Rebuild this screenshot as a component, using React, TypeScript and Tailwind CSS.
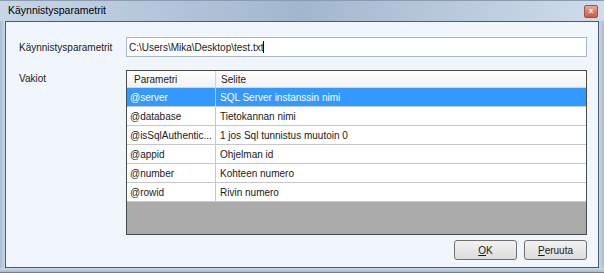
const rows = [
  { param: "@server", desc: "SQL Server instanssin nimi", selected: true },
  { param: "@database", desc: "Tietokannan nimi" },
  { param: "@isSqlAuthentic...", desc: "1 jos Sql tunnistus muutoin 0" },
  { param: "@appid", desc: "Ohjelman id" },
  { param: "@number", desc: "Kohteen numero" },
  { param: "@rowid", desc: "Rivin numero" },
];

export default function App() {
  return (
    <div
      className="w-[604px] h-[273px] flex flex-col bg-[#b4c7da] text-[10px] text-[#1a1a1a]"
      style={{ fontFamily: '"Liberation Sans", Arial, sans-serif' }}
    >
      {/* title bar */}
      <div className="h-[21px] flex items-center justify-between pl-[8px] pr-[6px] bg-gradient-to-r from-[#c6d6e7] via-[#a3b7cc] to-[#cfdcea] border-t border-[#8a9cb0]">
        <span className="text-[10.5px] text-black">Käynnistysparametrit</span>
        <div className="w-[14px] h-[13px] rounded-[2px] border border-[#9a5448] bg-gradient-to-b from-[#e8a696] to-[#c85a46] flex items-center justify-center text-white text-[8px] font-bold leading-none">
          x
        </div>
      </div>

      <div className="flex flex-1 min-h-0">
        <div className="w-[5px] bg-gradient-to-r from-[#a9bccf] to-[#cad8e6]" />
        {/* client */}
        <div className="flex-1 border border-[#4d5c6c] bg-[#f0f6fc] pl-[13px] pr-[11px] pt-[15px] flex flex-col">
          <div className="flex items-center h-[20px]">
            <span className="w-[107px]">Käynnistysparametrit</span>
            <div className="flex-1 h-[20px] border border-[#a9b8c8] bg-white flex items-center pl-[2px]">
              C:\Users\Mika\Desktop\test.txt
              <span className="w-px h-[12px] bg-black" />
            </div>
          </div>

          <div className="flex mt-[13px]">
            <span className="w-[107px] pt-[1px]">Vakiot</span>
            <div className="flex-1 h-[165px] border border-[#4a4a4a] bg-[#ababab] flex flex-col">
              <div className="h-[17px] flex bg-gradient-to-b from-white to-[#f1f2f4] border-b border-[#d5d5d5]">
                <div className="w-[89px] pl-[7px] flex items-center border-r border-[#d5d5d5]">Parametri</div>
                <div className="flex-1 pl-[5px] flex items-center">Selite</div>
              </div>
              {rows.map((r) => (
                <div
                  key={r.param}
                  className={
                    r.selected
                      ? "h-[19px] flex bg-[#3399ff] text-white border-b border-[#c8c8c8]"
                      : "h-[19px] flex bg-white border-b border-[#c8c8c8]"
                  }
                >
                  <div className="w-[89px] pl-[3px] flex items-center border-r border-[#c8c8c8] whitespace-nowrap overflow-hidden">
                    {r.param}
                  </div>
                  <div className="flex-1 pl-[4px] flex items-center">{r.desc}</div>
                </div>
              ))}
            </div>
          </div>

          <div className="flex justify-end gap-[7px] mt-[5px]">
            <button className="w-[63px] h-[20px] rounded-[3px] border border-[#707070] bg-gradient-to-b from-[#f2f2f2] to-[#dcdcdc] flex items-center justify-center">
              <span className="underline">O</span>K
            </button>
            <button className="w-[63px] h-[20px] rounded-[3px] border border-[#707070] bg-gradient-to-b from-[#f2f2f2] to-[#dcdcdc] flex items-center justify-center">
              <span className="underline">P</span>eruuta
            </button>
          </div>
        </div>
        <div className="w-[5px] bg-gradient-to-r from-[#cad8e6] to-[#a9bccf]" />
      </div>
      <div className="h-[5px] bg-gradient-to-b from-[#cad8e6] to-[#a9bccf] border-b border-[#6d7f92]" />
    </div>
  );
}
